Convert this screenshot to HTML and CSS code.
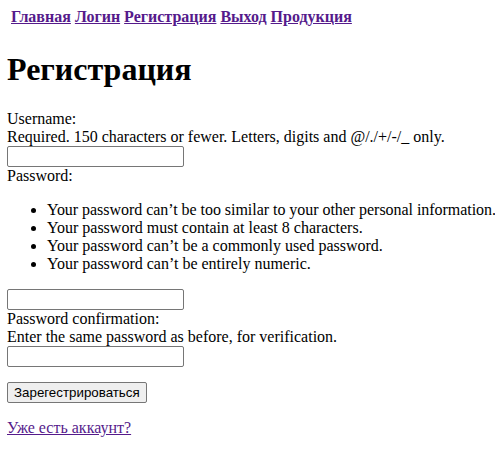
FILE: index.html
```html
<!DOCTYPE html>
<html lang="ru">
<head>
<meta charset="utf-8">
<title>Регистрация</title>
<link rel="stylesheet" href="styles.css">
</head>
<body class="page">
<nav class="nav">
  <a class="nav-link" href="#">Главная</a>
  <a class="nav-link" href="#">Логин</a>
  <a class="nav-link" href="#">Регистрация</a>
  <a class="nav-link" href="#">Выход</a>
  <a class="nav-link" href="#">Продукция</a>
</nav>
<h1 class="title">Регистрация</h1>
<form class="form">
  <label class="label" for="u">Username:</label>
  <span class="help">Required. 150 characters or fewer. Letters, digits and @/./+/-/_ only.</span>
  <input class="field" id="u" type="text">
  <label class="label" for="p1">Password:</label>
  <ul class="rules">
    <li class="rule rule-long">Your password can’t be too similar to your other personal information.</li>
    <li class="rule">Your password must contain at least 8 characters.</li>
    <li class="rule">Your password can’t be a commonly used password.</li>
    <li class="rule">Your password can’t be entirely numeric.</li>
  </ul>
  <input class="field" id="p1" type="password">
  <label class="label" for="p2">Password confirmation:</label>
  <span class="help">Enter the same password as before, for verification.</span>
  <input class="field" id="p2" type="password">
  <button class="submit" type="button">Зарегестрироваться</button>
</form>
<p class="footer"><a class="link" href="#">Уже есть аккаунт?</a></p>
</body>
</html>
```
FILE: styles.css
```css
html, body {
  background: #fff;
}
.page {
  margin: 8px 8px 8px 7px;
  font-family: "Liberation Serif", "Times New Roman", serif;
  font-size: 16px;
  line-height: normal;
  color: #000;
}
.nav {
  padding-left: 4px;
  padding-bottom: 4px;
  font-weight: bold;
}
.nav-link, .link {
  color: #551a8b;
  text-decoration: underline;
}
.title {
  font-size: 32px;
  font-weight: bold;
  margin: 21.44px 0 21.44px;
}
.form {
  display: flex;
  flex-direction: column;
  align-items: flex-start;
}
.label, .help {
  display: block;
}
.rules {
  margin: 16px 0;
  padding-left: 40px;
  list-style: disc;
}
.rule {
  white-space: nowrap;
}
.rule-long {
  letter-spacing: -0.04px;
}
.field {
  box-sizing: border-box;
  width: 177px;
  height: 21px;
  margin: 0;
  padding: 1px 2px;
  border: 1px solid #767676;
  border-radius: 2px;
  font-family: "Liberation Sans", Arial, sans-serif;
  font-size: 13.33px;
  background: #fff;
}
.submit {
  margin-top: 15px;
  box-sizing: border-box;
  height: 21px;
  padding: 1px 6px;
  border: 1px solid #767676;
  border-radius: 2px;
  background: #efefef;
  font-family: "Liberation Sans", Arial, sans-serif;
  font-size: 13.33px;
  color: #000;
}
.footer {
  margin: 16px 0;
}
```
